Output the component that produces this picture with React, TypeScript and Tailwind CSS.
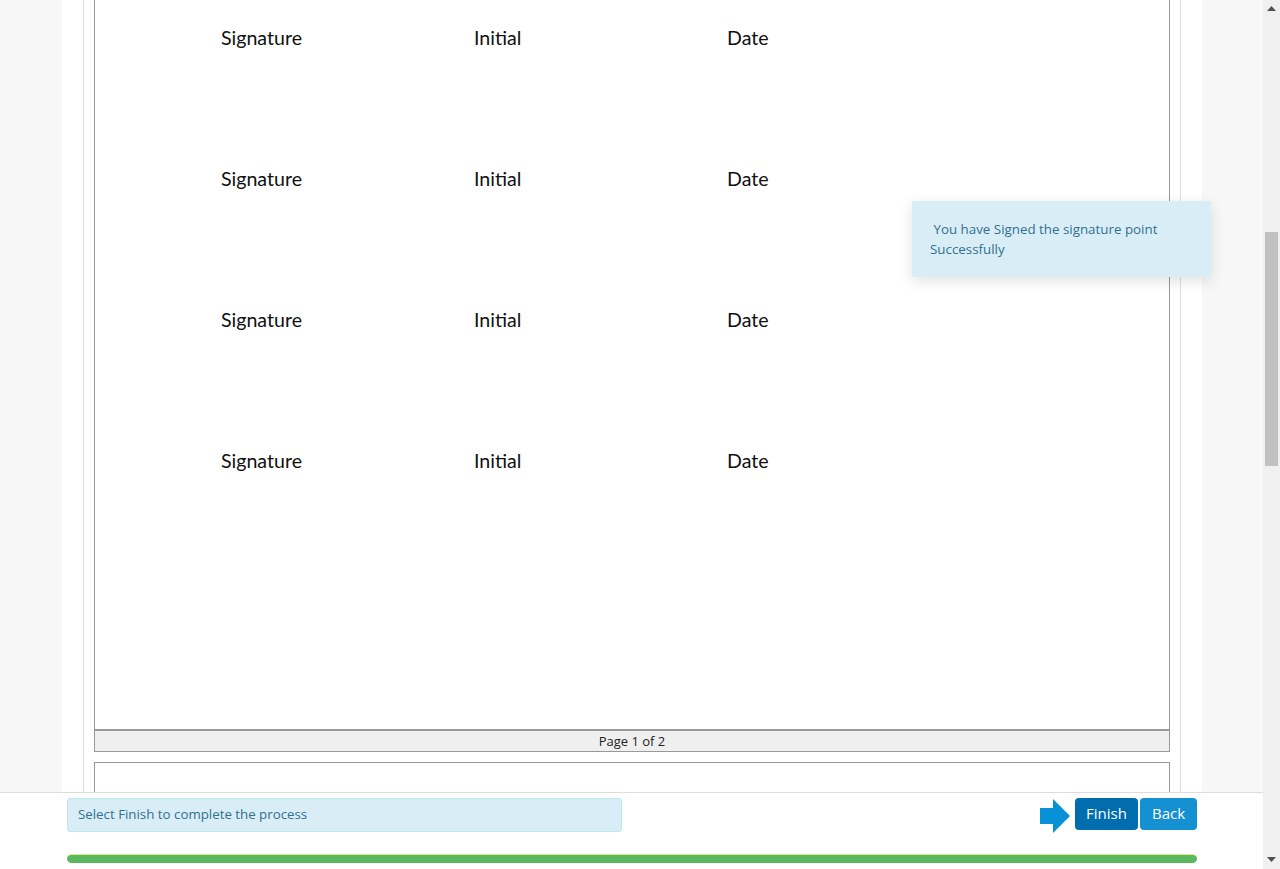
import React from "react";

const rows = [0, 1, 2, 3];

export default function App() {
  return (
    <div className="relative flex h-[869px] w-[1280px] overflow-hidden bg-[#f7f7f7]" style={{ fontFamily: "'Open Sans', sans-serif" }}>
      <div className="relative h-full w-[1263px] overflow-hidden">
        <div className="ml-[62px] h-full w-[1140px] bg-white pl-[21px] pr-[21px]">
          <div className="h-full border-x border-[#dddddd] px-[10px]">
            <div className="flex h-[730px] flex-col border-x border-b border-[#999999] pt-[26px]" style={{ fontFamily: "Lato, 'Open Sans', sans-serif" }}>
              {rows.map((r) => (
                <div key={r} className="flex h-[141px] items-start text-[19.6px] leading-[24px] text-[#111]">
                  <span className="ml-[126px] w-[253px]">Signature</span>
                  <span className="w-[253px]">Initial</span>
                  <span>Date</span>
                </div>
              ))}
            </div>
            <div className="flex h-[22px] items-center justify-center border-x border-t border-b border-[#999999] bg-[#efefef] text-[13px] leading-none text-[#222]">
              Page 1 of 2
            </div>
            <div className="mt-[10px] h-[200px] border border-[#999999]" />
          </div>
        </div>

        {/* toast */}
        <div className="absolute left-[912px] top-[201px] h-[76px] w-[299px] bg-[#d9edf7] px-[18px] pt-[18px] text-[13.35px] leading-[20px] text-[#31708f] shadow-[0_4px_14px_rgba(0,0,0,0.12)]">
          &nbsp;You have Signed the signature point Successfully
        </div>

        {/* bottom bar */}
        <div className="absolute bottom-0 left-0 h-[77px] w-[1263px] border-t border-[#dddddd] bg-white pl-[67px] pr-[66px] pt-[5px]">
          <div className="flex items-start justify-between">
            <div className="flex h-[34px] w-[555px] items-center rounded-[3px] border border-[#bce8f1] bg-[#d9edf7] px-[10px] text-[13.3px] text-[#31708f]">
              Select Finish to complete the process
            </div>
            <div className="flex items-start">
              <svg width="30" height="34" viewBox="0 0 30 34" className="mr-[5px] mt-[1px]">
                <path d="M0 9 H13 V0 L30 17 L13 34 V25 H0 Z" fill="#0890d6" />
              </svg>
              <button className="h-[32px] w-[63px] rounded-[4px] bg-[#006dae] pb-[1px] text-[15px] leading-none text-white">Finish</button>
              <button className="ml-[2px] h-[32px] w-[57px] rounded-[4px] bg-[#1590d0] pb-[1px] text-[15px] leading-none text-white">Back</button>
            </div>
          </div>
          <div className="mt-[21px] h-[9px] w-full rounded-full border-t border-[#e3ea8c] bg-[#5cb85c]" />
        </div>
      </div>

      {/* scrollbar */}
      <div className="relative h-full w-[17px] bg-[#f0f0f0]">
        <svg className="absolute left-[4px] top-[6px]" width="9" height="5" viewBox="0 0 9 5"><path d="M4.5 0 L9 5 H0 Z" fill="#505050" /></svg>
        <div className="absolute left-[2px] top-[232px] h-[234px] w-[13px] bg-[#c1c1c1]" />
        <svg className="absolute left-[4px] top-[857px]" width="9" height="5" viewBox="0 0 9 5"><path d="M0 0 H9 L4.5 5 Z" fill="#505050" /></svg>
      </div>
    </div>
  );
}
